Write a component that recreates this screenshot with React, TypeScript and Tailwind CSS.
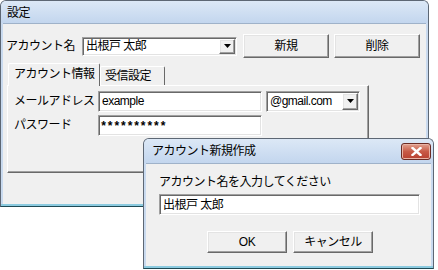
const font = "font-['Liberation_Sans','Noto_Sans_CJK_JP',sans-serif]";
const field =
  "border border-t-[#a0a0a0] border-l-[#a0a0a0] border-r-white border-b-white bg-white shadow-[inset_1px_1px_0_#696969,inset_-1px_-1px_0_#e3e3e3]";
const raised =
  "border border-t-white border-l-white border-r-[#696969] border-b-[#696969] bg-[#f0f0f0] shadow-[inset_-1px_-1px_0_#a0a0a0,inset_1px_1px_0_#e3e3e3]";
const titleBar = "bg-gradient-to-b from-[#dce8f6] to-[#c3d6ee]";

function DropButton({ className }: { className: string }) {
  return (
    <span className={`flex items-center justify-center ${raised} ${className}`}>
      <svg width="7" height="4" viewBox="0 0 7 4" aria-hidden="true">
        <path d="M0 0h7L3.5 4z" fill="#000" />
      </svg>
    </span>
  );
}

function Button({ label, className }: { label: string; className: string }) {
  return <div className={`flex items-center justify-center ${raised} ${className}`}>{label}</div>;
}

function MainWindow() {
  return (
    <div className="flex h-[207px] w-[429px] flex-col rounded-t-[6px] border border-[#5d6774] border-b-[#1f4a55] bg-[#c9daef]">
      <div className={`h-[22px] rounded-t-[5px] px-[6px] pt-[5px] leading-[14px] ${titleBar}`}>設定</div>
      <div className="mx-[2px] flex-1 border-t border-[#9fb2c9] bg-[#f0f0f0]">
        <div className="mt-[10px] flex h-[24px] items-center pl-[3px]">
          <span className="w-[76px]">アカウント名</span>
          <div className={`flex h-[19px] w-[155px] items-center pl-[3px] ${field}`}>
            <span className="flex-1">出根戸 太郎</span>
            <DropButton className="mr-[1px] h-[15px] w-[16px]" />
          </div>
          <Button label="新規" className="ml-[6px] h-[24px] w-[86px]" />
          <Button label="削除" className="ml-[5px] h-[24px] w-[86px]" />
        </div>
        <div className="ml-[4px] mt-[5px] w-[362px]">
          <div className="flex items-end pl-px">
            <div className="relative z-10 -mb-px h-[23px] w-[92px] rounded-t-[2px] border border-b-0 border-t-white border-l-white border-r-[#696969] bg-[#f0f0f0] pl-[5px] pt-[3px] leading-[15px]">
              アカウント情報
            </div>
            <div className="h-[19px] w-[65px] rounded-t-[2px] border border-b-0 border-t-white border-l-white border-r-[#696969] bg-[#f0f0f0] pl-[4px] pt-[2px] leading-[15px]">
              受信設定
            </div>
          </div>
          <div className="h-[88px] border border-t-white border-l-white border-r-[#696969] border-b-[#696969] shadow-[inset_-1px_-1px_0_#a0a0a0] px-[6px] pt-[5px]">
            <div className="flex h-[20px] items-center">
              <span className="w-[84px]">メールアドレス</span>
              <div className={`flex h-[21px] w-[164px] items-center pl-[3px] ${field}`}>example</div>
              <div className={`ml-[4px] flex h-[21px] w-[94px] items-center pl-[3px] ${field}`}>
                <span className="flex-1">@gmail.com</span>
                <DropButton className="mr-[1px] h-[17px] w-[16px]" />
              </div>
            </div>
            <div className="mt-[4px] flex h-[20px] items-center">
              <span className="w-[84px]">パスワード</span>
              <div className={`flex h-[21px] w-[164px] items-center pl-[1px] pt-[3px] font-['Liberation_Mono',monospace] text-[12px] font-bold tracking-[-0.6px] ${field}`}>
                **********
              </div>
            </div>
          </div>
        </div>
      </div>
      <div className="h-[2px] bg-[#8ccbe0]" />
    </div>
  );
}

function CloseButton() {
  return (
    <div className="flex h-[17px] w-[30px] items-center justify-center rounded-[3px] border border-[#6b2b24] bg-gradient-to-b from-[#e0a190] via-[#c85a47] to-[#b84030] shadow-[inset_0_0_0_1px_#e9b3a5]">
      <svg width="11" height="9" viewBox="0 0 11 9" aria-hidden="true">
        <path d="M1.5 1l8 7M9.5 1l-8 7" stroke="#fff" strokeWidth="2.4" strokeLinecap="square" />
      </svg>
    </div>
  );
}

function Dialog() {
  return (
    <div className="absolute left-[143px] top-[138px] flex h-[131px] w-[291px] flex-col rounded-t-[6px] border border-[#5d6774] border-b-[#1f4a55] bg-[#c9daef]">
      <div className={`flex h-[24px] items-center justify-between rounded-t-[5px] pl-[8px] pr-[2px] ${titleBar}`}>
        <span>アカウント新規作成</span>
        <CloseButton />
      </div>
      <div className="mx-[2px] flex-1 border-t border-[#9fb2c9] bg-[#f0f0f0] pl-[13px] pt-[11px]">
        <div className="leading-[14px]">アカウント名を入力してください</div>
        <div className={`mt-[5px] flex h-[21px] w-[261px] items-center pl-[3px] ${field}`}>出根戸 太郎</div>
        <div className="mt-[16px] flex pl-[48px]">
          <Button label="OK" className="h-[22px] w-[80px]" />
          <Button label="キャンセル" className="ml-[6px] h-[22px] w-[80px]" />
        </div>
      </div>
      <div className="h-[2px] bg-[#8ccbe0]" />
    </div>
  );
}

export default function App() {
  return (
    <div className={`relative h-[270px] w-[438px] overflow-hidden bg-white text-[12px] leading-[14px] tracking-[-0.5px] text-black ${font}`}>
      <MainWindow />
      <Dialog />
    </div>
  );
}
